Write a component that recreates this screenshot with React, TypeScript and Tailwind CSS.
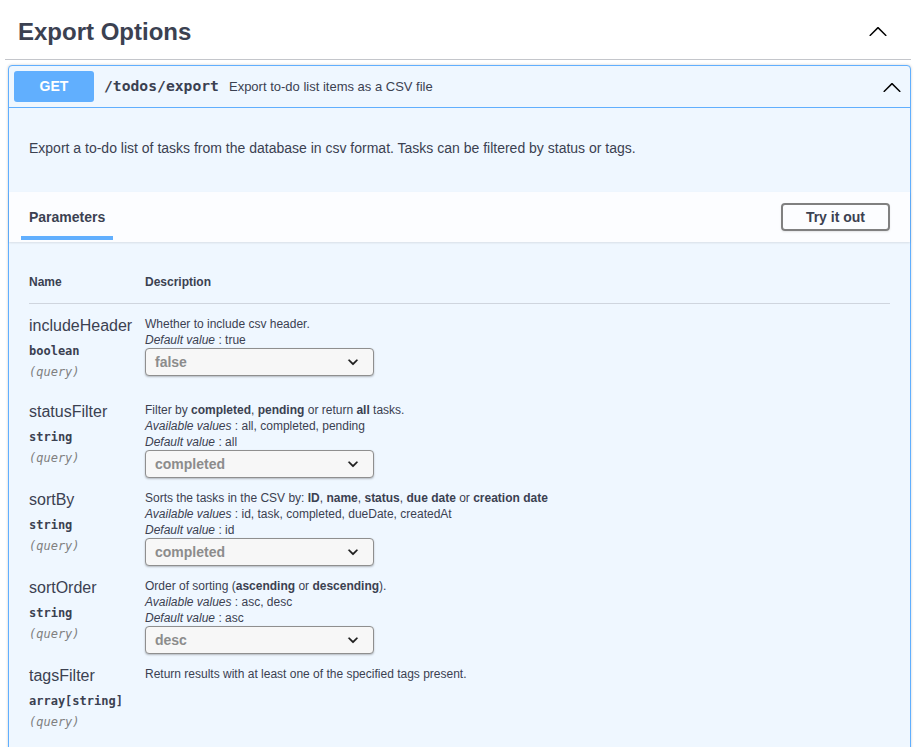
import React from "react";

const Chevron = ({ className = "" }: { className?: string }) => (
  <svg viewBox="0 0 20 20" width="20" height="20" className={className}>
    <path
      d="M 17.418 14.908 C 17.69 15.176 18.127 15.176 18.397 14.908 C 18.667 14.64 18.668 14.207 18.397 13.939 L 10.489 6.109 C 10.219 5.841 9.782 5.841 9.51 6.109 L 1.602 13.939 C 1.332 14.207 1.332 14.64 1.602 14.908 C 1.873 15.176 2.311 15.176 2.581 14.908 L 10 7.767 L 17.418 14.908 Z"
      fill="#000"
    />
  </svg>
);

const SelectChevron = () => (
  <svg viewBox="0 0 20 20" width="20" height="20" className="mr-[10px] shrink-0">
    <path
      d="M13.418 7.859a.695.695 0 01.978 0 .68.68 0 010 .969l-3.908 3.83a.697.697 0 01-.979 0l-3.908-3.83a.68.68 0 010-.969.695.695 0 01.978 0L10 11z"
      fill="#1f1f1f"
      stroke="#1f1f1f"
      strokeWidth="0.4"
    />
  </svg>
);

const FakeSelect = ({ value }: { value: string }) => (
  <div className="w-[229px] h-[28px] border border-[#8f8f8f] rounded-[4px] bg-[#f7f7f7] shadow-[0_1px_2px_rgba(0,0,0,0.25)] flex items-center pl-[9px] text-[14px] font-bold text-[#8c8c8c]">
    <span className="flex-1">{value}</span>
    <SelectChevron />
  </div>
);

type Param = {
  name: string;
  type: string;
  desc: React.ReactNode;
  available?: string;
  def?: string;
  value?: string;
};

const params: Param[] = [
  {
    name: "includeHeader",
    type: "boolean",
    desc: <>Whether to include csv header.</>,
    def: "true",
    value: "false",
  },
  {
    name: "statusFilter",
    type: "string",
    desc: (
      <>
        Filter by <b>completed</b>, <b>pending</b> or return <b>all</b> tasks.
      </>
    ),
    available: "all, completed, pending",
    def: "all",
    value: "completed",
  },
  {
    name: "sortBy",
    type: "string",
    desc: (
      <>
        Sorts the tasks in the CSV by: <b>ID</b>, <b>name</b>, <b>status</b>, <b>due date</b> or{" "}
        <b>creation date</b>
      </>
    ),
    available: "id, task, completed, dueDate, createdAt",
    def: "id",
    value: "completed",
  },
  {
    name: "sortOrder",
    type: "string",
    desc: (
      <>
        Order of sorting (<b>ascending</b> or <b>descending</b>).
      </>
    ),
    available: "asc, desc",
    def: "asc",
    value: "desc",
  },
  {
    name: "tagsFilter",
    type: "array[string]",
    desc: <>Return results with at least one of the specified tags present.</>,
  },
];

export default function App() {
  return (
    <div className="w-[914px] h-[747px] overflow-hidden bg-white font-['Liberation_Sans',Arial,sans-serif] text-[#3b4151]">
      <div className="pl-[5px] pr-[3px]">
        {/* Tag header */}
        <div className="flex items-center h-[60px] border-b border-[#c4c6cb] pl-[13px] pr-[23px]">
          <h3 className="flex-1 text-[24px] font-bold leading-[30px] pt-[4px]">Export Options</h3>
          <Chevron className="mt-[2px]" />
        </div>

        {/* Opblock */}
        <div className="mt-[5px] ml-[3px] border border-[#61affe] rounded-[4px] bg-[#eff7ff] shadow-[0_0_3px_rgba(0,0,0,0.19)]">
          <div className="flex items-center p-[5px] border-b border-[#61affe]">
            <div className="w-[80px] h-[31px] rounded-[3px] bg-[#61affe] text-white text-[14px] font-bold flex items-center justify-center">
              GET
            </div>
            <span className="px-[10px] font-['DejaVu_Sans_Mono',monospace] font-bold text-[14.7px]">
              /todos/export
            </span>
            <span className="flex-1 text-[13px]">Export to-do list items as a CSV file</span>
            <Chevron className="mr-[3px]" />
          </div>

          <div className="h-[84px] px-[20px] pt-[30px] text-[14px] leading-[21px]">
            Export a to-do list of tasks from the database in csv format. Tasks can be filtered by status or tags.
          </div>

          <div className="h-[50px] bg-white/80 shadow-[0_1px_2px_rgba(0,0,0,0.1)] flex justify-between px-[20px]">
            <div className="flex flex-col pt-[15px]">
              <div className="text-[14px] font-bold leading-[20px]">Parameters</div>
              <div className="mt-[9px] -mx-2 h-[4px] bg-[#61affe]" />
            </div>
            <div className="flex items-center">
              <button className="h-[28px] px-[23px] border-2 border-[#808080] rounded-[4px] text-[14px] font-bold leading-none shadow-[0_1px_2px_rgba(0,0,0,0.1)] bg-transparent text-[#3b4151]">
                Try it out
              </button>
            </div>
          </div>

          <div className="p-[20px]">
            <div className="grid grid-cols-[116px_1fr] border-b border-[#cfd5de] pt-[12px] pb-[13px] text-[12px] font-bold leading-[16px]">
              <div>Name</div>
              <div>Description</div>
            </div>
            {params.map((p, i) => (
              <div key={p.name} className="grid grid-cols-[116px_1fr]">
                <div className={i === 0 ? "pt-[12px] pb-[8px]" : "py-[10px]"}>
                  <div className="text-[16px] leading-[20px]">{p.name}</div>
                  <div className="pt-[7px] pb-[5px] text-[12px] leading-[16px] font-bold font-['DejaVu_Sans_Mono',monospace]">
                    {p.type}
                  </div>
                  <div className="pb-[4px] text-[12px] leading-[16px] italic text-[#808080] font-['DejaVu_Sans_Mono',monospace]">
                    (query)
                  </div>
                </div>
                <div className={(i === 0 ? "pt-[12px]" : "pt-[10px]") + " text-[12px] leading-[16px]"}>
                  <div>{p.desc}</div>
                  {p.available && (
                    <div>
                      <i>Available values</i> : {p.available}
                    </div>
                  )}
                  {p.def && (
                    <div>
                      <i>Default value</i> : {p.def}
                    </div>
                  )}
                  {p.value && <FakeSelect value={p.value} />}
                </div>
              </div>
            ))}
          </div>
        </div>
      </div>
    </div>
  );
}
